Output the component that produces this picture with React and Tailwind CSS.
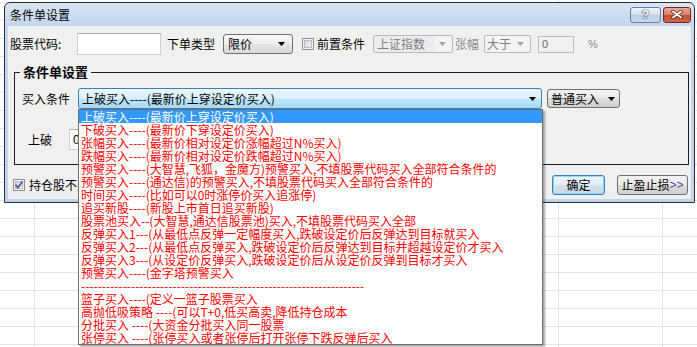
import React from "react";

const Arrow = ({ color = "#000" }) => (
  <svg width="7" height="4" viewBox="0 0 7 4" className="shrink-0">
    <path d="M0 0H7L3.5 4Z" fill={color} />
  </svg>
);

const CheckBox = ({ checked }) => (
  <svg width="12" height="12" viewBox="0 0 12 12" className="shrink-0">
    <defs>
      <linearGradient id={checked ? "cbg1" : "cbg2"} x1="0" y1="0" x2="1" y2="1">
        <stop offset="0" stopColor="#cbcfd5" />
        <stop offset="1" stopColor="#f6f6f6" />
      </linearGradient>
    </defs>
    <rect x="0.5" y="0.5" width="11" height="11" fill="#f4f4f4" stroke="#8e8f8f" />
    <rect x="2.5" y="2.5" width="7" height="7" fill={`url(#${checked ? "cbg1" : "cbg2"})`} stroke="#b9bcc1" />
    {checked && (
      <path d="M2.6 5.8 L4.9 8.6 L9.6 2.4" stroke="#3f55a8" strokeWidth="1.7" fill="none" />
    )}
  </svg>
);

const items = [
  "上破买入----(最新价上穿设定价买入)",
  "下破买入----(最新价下穿设定价买入)",
  "张幅买入----(最新价相对设定价涨幅超过N%买入)",
  "跌幅买入----(最新价相对设定价跌幅超过N%买入)",
  "预警买入----(大智慧,飞狐，金魔方)预警买入,不填股票代码买入全部符合条件的",
  "预警买入----(通达信)的预警买入,不填股票代码买入全部符合条件的",
  "时间买入----(比如可以0时涨停价买入追涨停)",
  "追买新股----(新股上市首日追买新股)",
  "股票池买入--(大智慧,通达信股票池)买入,不填股票代码买入全部",
  "反弹买入1---(从最低点反弹一定幅度买入,跌破设定价后反弹达到目标就买入",
  "反弹买入2---(从最低点反弹买入,跌破设定价后反弹达到目标并超越设定价才买入",
  "反弹买入3---(从设定价反弹买入,跌破设定价后从设定价反弹到目标才买入",
  "预警买入----(金字塔预警买入",
  "-".repeat(68),
  "篮子买入----(定义一篮子股票买入",
  "高抛低吸策略 ----(可以T+0,低买高卖,降低持仓成本",
  "分批买入 ----(大资金分批买入同一股票",
  "张停买入 ----(张停买入或者张停后打开张停下跌反弹后买入",
];

export default function App() {
  return (
    <div className="relative w-[697px] h-[347px] overflow-hidden bg-white bg-[image:repeating-linear-gradient(to_bottom,transparent_0_2px,#e4e4e4_2px_3px,transparent_3px_18px),linear-gradient(to_right,transparent_34px,#e4e4e4_34px_35px,transparent_35px_558px,#e4e4e4_558px_559px,transparent_559px_662px,#e4e4e4_662px_663px,transparent_663px)] font-['Noto_Sans_CJK_SC','Microsoft_YaHei',sans-serif] text-[12px] text-black">
      {/* Dialog window */}
      <div className="ml-[4px] mt-[2px] w-[691px] h-[201px] flex flex-col border border-[#2e2e2e] rounded-t-[6px] bg-[linear-gradient(#d9e5f3,#c4d7ed_22px,#bfd3ea)] px-[3px] pb-[3px]">
        {/* Title bar */}
        <div className="h-[23px] flex items-center shrink-0">
          <span className="pl-[2px] leading-[16px] text-[#000]">条件单设置</span>
          <div className="ml-auto flex items-center gap-[2px]">
            <div className="w-[31px] h-[16px] rounded-[3px] border border-[#6b7f9b] bg-[linear-gradient(#eef3fa,#d3deec_50%,#bccde3_50%,#c9d8ec)] flex items-center justify-center">
              <span className="font-['Liberation_Sans',sans-serif] font-bold text-[13px] leading-[14px] text-white [text-shadow:0_0_1px_#2c3a52,0_0_1px_#2c3a52,0_0_1px_#2c3a52]">?</span>
            </div>
            <div className="w-[28px] h-[16px] rounded-[3px] border border-[#6f2a1f] bg-[linear-gradient(#e9a99b,#d7806b_50%,#c64a30_50%,#d2654a)] flex items-center justify-center">
              <svg width="12" height="9" viewBox="0 0 12 9">
                <path d="M2 1.5L10 7.5M10 1.5L2 7.5" stroke="#4a1810" strokeWidth="3.4" strokeLinecap="round" />
                <path d="M2 1.5L10 7.5M10 1.5L2 7.5" stroke="#ffffff" strokeWidth="2" strokeLinecap="round" />
              </svg>
            </div>
          </div>
        </div>

        {/* Client area */}
        <div className="flex-1 flex flex-col bg-[#f0f0f0]">
          {/* Row 1 */}
          <div className="mt-[7px] h-[22px] flex items-center pl-[2px]">
            <span className="w-[67px] shrink-0 leading-[16px]">股票代码:</span>
            <div className="w-[84px] h-[22px] shrink-0 bg-white border border-[#cdd0d6] border-t-[#abadb3]" />
            <span className="ml-[6px] w-[48px] shrink-0 leading-[16px]">下单类型</span>
            <div className="ml-[8px] w-[70px] h-[20px] shrink-0 rounded-[3px] border border-[#707070] bg-[linear-gradient(#f6f6f6,#efefef_50%,#e5e5e5_50%,#dadada)] flex items-center pl-[4px] pr-[7px]">
              <span className="leading-[16px]">限价</span>
              <span className="ml-auto"><Arrow /></span>
            </div>
            <span className="ml-[9px]"><CheckBox checked={false} /></span>
            <span className="ml-[3px] w-[48px] shrink-0 leading-[16px]">前置条件</span>
            <div className="ml-[8px] w-[80px] h-[18px] shrink-0 rounded-[2px] border border-[#b6b9bd] bg-[#f4f4f4] flex items-center">
              <span className="pl-[3px] w-[60px] h-full bg-[#ececec] leading-[16px] text-[#7d7d7d]">上证指数</span>
              <span className="ml-auto mr-[6px]"><Arrow color="#a3a3a3" /></span>
            </div>
            <span className="ml-[2px] w-[24px] shrink-0 leading-[16px] text-[#8b8b8b]">张幅</span>
            <div className="ml-[5px] w-[47px] h-[18px] shrink-0 rounded-[2px] border border-[#b6b9bd] bg-[#f4f4f4] flex items-center">
              <span className="pl-[2px] leading-[16px] text-[#7d7d7d]">大于</span>
              <span className="ml-auto mr-[6px]"><Arrow color="#a3a3a3" /></span>
            </div>
            <div className="ml-[7px] w-[36px] h-[17px] shrink-0 border border-[#b9bcc1] bg-[#f0f0f0] flex items-center pl-[3px]">
              <span className="font-['Liberation_Sans',sans-serif] text-[11px] leading-[12px] text-[#6a6a6a]">0</span>
            </div>
            <span className="ml-[14px] font-['Liberation_Sans',sans-serif] text-[11px] text-[#8b8b8b]">%</span>
          </div>

          {/* Group box */}
          <fieldset className="mt-[9px] ml-[6px] w-[675px] h-[101px] border border-[#1e1e1e] flex flex-col">
            <legend className="ml-[5px] px-[3px] text-[13px] font-bold leading-[16px]">条件单设置</legend>
            <div className="mt-[8px] h-[21px] flex items-center pl-[7px]">
              <span className="w-[48px] shrink-0 leading-[16px]">买入条件</span>
              <div className="ml-[8px] w-[464px] h-[21px] shrink-0 rounded-[3px] border border-[#3c7fb1] bg-[linear-gradient(#eaf6fd,#d9f0fc_50%,#bee6fd_50%,#a7d9f5)] flex items-center pl-[3px] pr-[5px]">
                <span className="leading-[16px] whitespace-nowrap">上破买入----(最新价上穿设定价买入)</span>
                <span className="ml-auto"><Arrow /></span>
              </div>
              <div className="ml-[5px] w-[73px] h-[19px] shrink-0 rounded-[3px] border border-[#707070] bg-[linear-gradient(#f2f2f2,#ebebeb_50%,#dddddd_50%,#cfcfcf)] flex items-center pl-[3px] pr-[4px]">
                <span className="leading-[16px]">普通买入</span>
                <span className="ml-auto"><Arrow /></span>
              </div>
            </div>
            <div className="mt-[20px] h-[21px] flex items-center pl-[13px]">
              <span className="w-[24px] shrink-0 leading-[16px]">上破</span>
              <div className="ml-[17px] w-[90px] h-[21px] shrink-0 bg-white border border-[#cdd0d6] border-t-[#abadb3] flex items-center pl-[3px]">
                <span className="font-['Liberation_Sans',sans-serif] text-[12px] leading-[14px]">0</span>
              </div>
            </div>
          </fieldset>

          {/* Bottom row */}
          <div className="mt-[10px] h-[20px] flex items-center pl-[5px] pr-[3px]">
            <CheckBox checked={true} />
            <span className="ml-[4px] leading-[16px] whitespace-nowrap">持仓股不买入</span>
            <div className="ml-auto flex items-center gap-[12px]">
              <div className="w-[53px] h-[20px] rounded-[3px] border border-[#3c7fb1] shadow-[inset_0_0_0_1px_#8fdcf8] bg-[linear-gradient(#f1f7fc,#e3edf6_50%,#d4e1ed_50%,#cad9e8)] flex items-center justify-center">
                <span className="leading-[16px]">确定</span>
              </div>
              <div className="w-[71px] h-[20px] rounded-[3px] border border-[#707070] bg-[linear-gradient(#f2f2f2,#ebebeb_50%,#dddddd_50%,#cfcfcf)] flex items-center justify-center">
                <span className="leading-[16px]">止盈止损</span>
                <span className="leading-[16px] font-['Liberation_Sans',sans-serif] text-[12px] text-[#3d4f9a]">&gt;&gt;</span>
              </div>
            </div>
          </div>
        </div>
      </div>

      {/* Dropdown list overlay */}
      <div className="absolute left-[78px] top-[109px] w-[465px] border border-[#6e6e6e] bg-white shadow-[2px_2px_2px_rgba(60,60,60,0.45)]">
        {items.map((t, i) => (
          <div
            key={i}
            className={
              i === 0
                ? "h-[13px] leading-[13px] pl-[2px] whitespace-nowrap bg-[#3399ff] text-white"
                : "h-[13px] leading-[13px] pl-[2px] whitespace-nowrap text-[#ff0000]"
            }
          >
            {t}
          </div>
        ))}
      </div>
    </div>
  );
}
